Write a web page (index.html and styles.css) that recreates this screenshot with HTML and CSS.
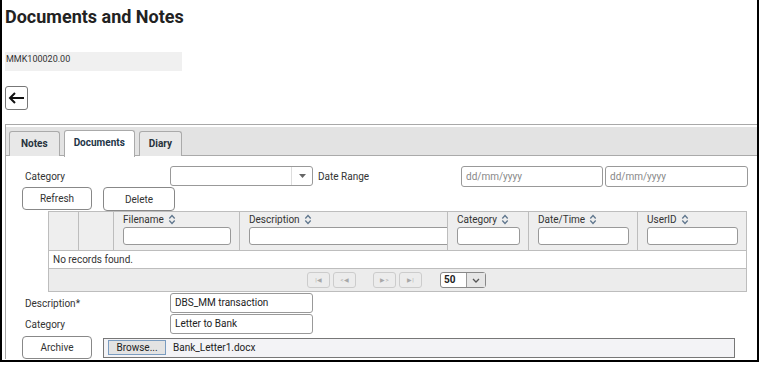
FILE: index.html
```html
<!DOCTYPE html>
<html lang="en">
<head>
    <meta charset="UTF-8">
    <meta name="viewport" content="width=device-width, initial-scale=1.0">
    <title>Documents and Notes</title>
    <link rel="stylesheet" href="styles.css">
</head>
<body>
<div class="frame">
    <h1 class="title">Documents and Notes</h1>
    <div class="ref-box">MMK100020.00</div>
    <button class="back-btn" title="Back">
        <svg width="17" height="12" viewBox="0 0 17 12"><path d="M16 6H2M7 1L2 6l5 5" fill="none" stroke="#111" stroke-width="2"/></svg>
    </button>

    <div class="panel">
        <ul class="tabs">
            <li class="tab">Notes</li>
            <li class="tab active">Documents</li>
            <li class="tab">Diary</li>
        </ul>

        <div class="panel-body">
            <div class="filter-row">
                <label class="lbl">Category</label>
                <div class="select">
                    <span class="select-val"></span>
                    <span class="select-arrow"><svg width="7" height="4" viewBox="0 0 7 4"><path d="M0 0h7L3.5 4z" fill="#666"/></svg></span>
                </div>
                <label class="lbl range-lbl">Date Range</label>
                <input class="date" type="text" placeholder="dd/mm/yyyy">
                <input class="date date-to" type="text" placeholder="dd/mm/yyyy">
            </div>

            <div class="btn-row">
                <button class="btn">Refresh</button>
                <button class="btn btn-wide">Delete</button>
            </div>

            <table class="grid">
                <colgroup>
                    <col style="width:30px"><col style="width:35px"><col style="width:126px"><col style="width:208px">
                    <col style="width:81px"><col style="width:109px"><col style="width:109px">
                </colgroup>
                <thead>
                    <tr>
                        <th></th>
                        <th></th>
                        <th><span class="th-text">Filename <svg class="sort" width="8" height="11" viewBox="0 0 8 11"><path d="M1.3 4.5L4 1.5l2.7 3M1.3 6.5L4 9.5l2.7-3" fill="none" stroke="#60778e" stroke-width="1.3"/></svg></span><input class="filter" type="text"></th>
                        <th><span class="th-text">Description <svg class="sort" width="8" height="11" viewBox="0 0 8 11"><path d="M1.3 4.5L4 1.5l2.7 3M1.3 6.5L4 9.5l2.7-3" fill="none" stroke="#60778e" stroke-width="1.3"/></svg></span><input class="filter filter-long" type="text"></th>
                        <th><span class="th-text">Category <svg class="sort" width="8" height="11" viewBox="0 0 8 11"><path d="M1.3 4.5L4 1.5l2.7 3M1.3 6.5L4 9.5l2.7-3" fill="none" stroke="#60778e" stroke-width="1.3"/></svg></span><input class="filter" type="text"></th>
                        <th><span class="th-text">Date/Time <svg class="sort" width="8" height="11" viewBox="0 0 8 11"><path d="M1.3 4.5L4 1.5l2.7 3M1.3 6.5L4 9.5l2.7-3" fill="none" stroke="#60778e" stroke-width="1.3"/></svg></span><input class="filter" type="text"></th>
                        <th><span class="th-text">UserID <svg class="sort" width="8" height="11" viewBox="0 0 8 11"><path d="M1.3 4.5L4 1.5l2.7 3M1.3 6.5L4 9.5l2.7-3" fill="none" stroke="#60778e" stroke-width="1.3"/></svg></span><input class="filter" type="text"></th>
                    </tr>
                </thead>
                <tbody>
                    <tr><td colspan="7" class="empty">No records found.</td></tr>
                </tbody>
                <tfoot>
                    <tr>
                        <td colspan="7" class="pager-cell">
                            <div class="pager">
                                <span class="pg-btn">|&#9664;</span>
                                <span class="pg-btn">&lt;&#9664;</span>
                                <span class="pg-pages"></span>
                                <span class="pg-btn">&#9654;&gt;</span>
                                <span class="pg-btn">&#9654;|</span>
                                <span class="pg-size"><b>50</b><span class="pg-size-arrow"><svg width="8" height="5" viewBox="0 0 8 5"><path d="M1 1l3 3 3-3" fill="none" stroke="#555" stroke-width="1.3"/></svg></span></span>
                            </div>
                        </td>
                    </tr>
                </tfoot>
            </table>

            <div class="form-row">
                <label class="lbl">Description*</label>
                <div class="text-box">DBS_MM transaction</div>
            </div>
            <div class="form-row">
                <label class="lbl">Category</label>
                <div class="text-box">Letter to Bank</div>
            </div>
            <div class="upload-row">
                <button class="btn">Archive</button>
                <div class="file-box">
                    <span class="browse">Browse...</span>
                    <span class="file-name">Bank_Letter1.docx</span>
                </div>
            </div>
        </div>
    </div>
</div>
</body>
</html>
```

FILE: styles.css
```css
body {
    margin: 0;
    font-family: Roboto, "Liberation Sans", Arial, sans-serif;
    font-size: 10px;
    color: #333;
    background-color: #fff;
}
.frame {
    box-sizing: border-box;
    width: 759px;
    height: 362px;
    border-left: 2px solid #000;
    border-right: 2px solid #000;
    border-bottom: 2px solid #000;
    padding-left: 3px;
    overflow: hidden;
}
.title {
    margin: 6px 0 0 0;
    font-size: 18px;
    line-height: 22px;
    font-weight: bold;
    color: #222;
}
.ref-box {
    margin-top: 24px;
    width: 177px;
    height: 19px;
    padding: 2px 0 0 1px;
    box-sizing: border-box;
    background-color: #f0f0f0;
    font-size: 9px;
    color: #333;
}
.back-btn {
    display: flex;
    align-items: center;
    justify-content: center;
    margin-top: 15px;
    width: 23px;
    height: 24px;
    padding: 0;
    border: 1px solid #777;
    border-radius: 3px;
    background-color: #fff;
}
.panel {
    margin-top: 14px;
    border-top: 1px solid #a8a8a8;
    border-left: 1px solid #a8a8a8;
    padding-top: 2px;
}
.tabs {
    display: flex;
    gap: 4px;
    margin: 0;
    padding: 4px 0 0 3px;
    list-style: none;
    height: 24px;
    background-color: #e3e3e3;
    border-bottom: 1px solid #aaa;
}
.tab {
    padding: 0 9px;
    height: 24px;
    line-height: 24px;
    border: 1px solid #aaa;
    border-bottom: none;
    border-radius: 3px 3px 0 0;
    background-color: #e8e8e8;
    font-weight: bold;
    color: #27323c;
}
.tab:first-child {
    padding: 0 11px;
}
.tab.active {
    margin-top: -1px;
    height: 26px;
    background-color: #fff;
    color: #233547;
}
.panel-body {
    padding: 10px 0 0 16px;
}
.filter-row {
    display: flex;
    align-items: center;
    height: 20px;
}
.lbl {
    box-sizing: border-box;
    width: 148px;
    padding-left: 3px;
    color: #333;
}
.select {
    display: flex;
    box-sizing: border-box;
    width: 143px;
    height: 20px;
    border: 1px solid #999;
    border-radius: 3px;
    background-color: #fff;
}
.select-val {
    flex: 1;
}
.select-arrow {
    display: flex;
    align-items: center;
    justify-content: center;
    width: 20px;
    border-left: 1px solid #ddd;
}
.range-lbl {
    width: 143px;
    margin-left: 5px;
    padding-left: 0;
}
.date {
    box-sizing: border-box;
    width: 142px;
    height: 21px;
    margin: 0;
    padding: 0 0 0 4px;
    border: 1px solid #999;
    border-radius: 3px;
    font-family: inherit;
    font-size: 10px;
}
.date::placeholder {
    color: #888;
}
.date-to {
    width: 143px;
    margin-left: 2px;
}
.btn-row {
    display: flex;
    gap: 11px;
    margin-top: 1px;
}
.btn {
    box-sizing: border-box;
    width: 70px;
    height: 23px;
    padding: 0;
    border: 1px solid #888;
    border-radius: 4px;
    background-color: #fff;
    font-family: inherit;
    font-size: 10px;
    color: #333;
}
.btn-wide {
    width: 72px;
    height: 24px;
}
.grid {
    margin: 0 0 0 26px;
    width: 698px;
    table-layout: fixed;
    border-collapse: collapse;
    border: 1px solid #bdbdbd;
}
.grid th {
    height: 38px;
    padding: 0 0 0 9px;
    vertical-align: top;
    text-align: left;
    font-weight: normal;
    background-color: #eee;
    border-left: 1px solid #bdbdbd;
    overflow: hidden;
    white-space: nowrap;
}
.th-text {
    display: flex;
    align-items: center;
    gap: 4px;
    height: 15px;
    color: #333;
}
.filter {
    display: block;
    box-sizing: border-box;
    width: calc(100% - 8px);
    height: 18px;
    margin: 0;
    border: 1px solid #999;
    border-radius: 3px;
    background-color: #fff;
}
.filter-long {
    width: 220px;
}
.empty {
    height: 17px;
    padding: 0 0 0 4px;
    border-top: 1px solid #bdbdbd;
    background-color: #fff;
}
.pager-cell {
    height: 22px;
    padding: 0;
    border-top: 1px solid #bdbdbd;
    background-color: #ececec;
}
.pager {
    display: flex;
    align-items: center;
    gap: 3px;
    padding-left: 258px;
}
.pg-btn {
    box-sizing: border-box;
    width: 23px;
    height: 16px;
    border: 1px solid #ccc;
    border-radius: 3px;
    text-align: center;
    line-height: 14px;
    font-size: 6px;
    color: #a8a8a8;
}
.pg-pages {
    width: 11px;
}
.pg-size {
    display: flex;
    margin-left: 15px;
    box-sizing: border-box;
    height: 16px;
    border: 1px solid #888;
    border-radius: 3px;
    background-color: #fff;
}
.pg-size b {
    width: 22px;
    padding-left: 3px;
    line-height: 14px;
    font-size: 10px;
    color: #222;
}
.pg-size-arrow {
    display: flex;
    align-items: center;
    justify-content: center;
    width: 18px;
    border-left: 1px solid #999;
    background-color: #e6e6e6;
}
.form-row {
    display: flex;
    align-items: center;
    height: 20px;
    margin-top: 1px;
}
.form-row:first-of-type {
    margin-top: 2px;
}
.text-box {
    box-sizing: border-box;
    width: 143px;
    height: 20px;
    padding-left: 4px;
    line-height: 18px;
    border: 1px solid #999;
    border-radius: 3px;
    color: #222;
}
.upload-row {
    display: flex;
    align-items: center;
    gap: 11px;
    margin-top: 2px;
}
.file-box {
    display: flex;
    align-items: center;
    gap: 7px;
    box-sizing: border-box;
    width: 632px;
    height: 20px;
    padding-left: 4px;
    border: 1px solid #777;
    background-color: #f3f3f6;
}
.browse {
    box-sizing: border-box;
    width: 58px;
    height: 15px;
    line-height: 13px;
    text-align: center;
    border: 1px solid #7a9cc0;
    background-color: #e3e3e3;
    color: #222;
}
.file-name {
    color: #222;
}
```
